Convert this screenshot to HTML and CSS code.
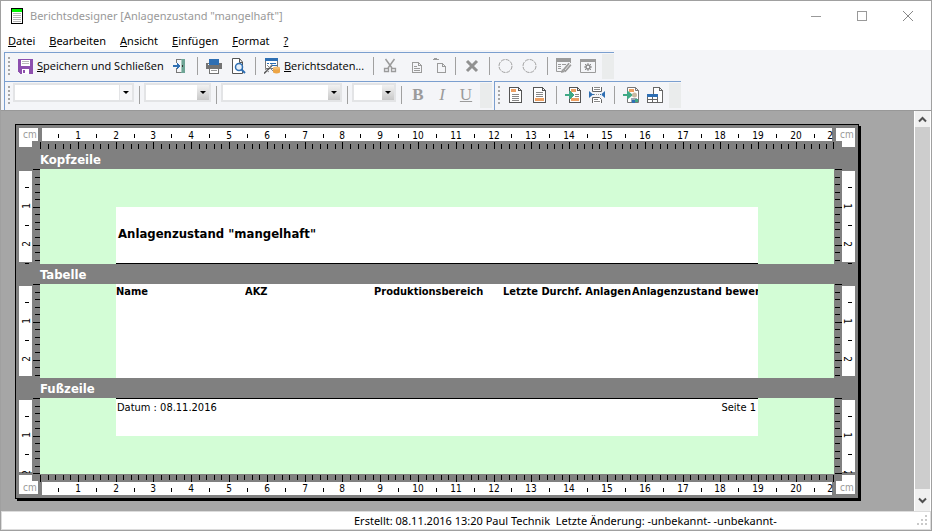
FILE: index.html
```html
<!DOCTYPE html>
<html lang="de">
<head>
<meta charset="utf-8">
<title>Berichtsdesigner</title>
<link rel="stylesheet" href="styles.css">
</head>
<body>
<div class="window">
  <header class="titlebar">
    <svg class="app-icon" width="12" height="16" viewBox="0 0 12 16" shape-rendering="crispEdges"><path fill="#000" d="M0 0h12v16H0z"/><path fill="#fff" d="M1 1h10v14H1z"/><path fill="#00f000" d="M1 1h10v3H1z"/><path fill="#b4b4b4" d="M2 5h8v1H2zM2 7h8v1H2zM2 9h8v1H2zM2 11h8v1H2zM2 13h8v1H2z"/></svg>
    <h1 class="title">Berichtsdesigner [Anlagenzustand "mangelhaft"]</h1>
    <div class="win-buttons">
      <button class="win-btn" aria-label="Minimieren"><svg width="10" height="10" shape-rendering="crispEdges"><path d="M0 5h10v1H0z" fill="#999"/></svg></button>
      <button class="win-btn" aria-label="Maximieren"><svg width="10" height="10" shape-rendering="crispEdges"><path d="M.5.5h9v9h-9z" fill="none" stroke="#999"/></svg></button>
      <button class="win-btn" aria-label="Schließen"><svg width="10" height="10"><path d="M0 0l10 10M10 0L0 10" fill="none" stroke="#888"/></svg></button>
    </div>
  </header>
  <nav class="menubar">
    <a class="menu" href="#"><u>D</u>atei</a>
    <a class="menu" href="#"><u>B</u>earbeiten</a>
    <a class="menu" href="#"><u>A</u>nsicht</a>
    <a class="menu" href="#"><u>E</u>infügen</a>
    <a class="menu" href="#"><u>F</u>ormat</a>
    <a class="menu" href="#"><u>?</u></a>
  </nav>
  <div class="toolbars">
    <div class="toolbar-row">
      <div class="toolbar">
        <span class="grip"></span>
        <button class="text-btn"><svg width="16" height="16" shape-rendering="crispEdges"><path fill="#8d4fae" d="M0 1h15v15H2l-2-2z"/><path fill="#fff" d="M3 2h9v6H3zM4 11h7v5H4z"/><path fill="#b9b9b9" d="M4 3h7v1H4zM4 5h7v1H4z"/><path fill="#8d4fae" d="M5 12h2v3H5z"/></svg><span><u>S</u>peichern und Schließen</span></button>
        <button class="icon-btn" aria-label="Schließen"><svg width="16" height="16" shape-rendering="crispEdges"><path fill="none" stroke="#777" d="M4.500 5V1.500H12M4.500 10v4.500H12"/><path fill="#6fa596" d="M9 1h4v14H9z"/><path fill="#a9cabf" d="M9 2h1v12H9z"/><path fill="#333" d="M10 7h1v2h-1z"/><path fill="#2f6fb3" d="M1 7h4V5l4 3-4 3V9H1z"/></svg></button>
        <span class="sep"></span>
        <button class="icon-btn" aria-label="Drucken"><svg width="16" height="16" shape-rendering="crispEdges"><path fill="#737373" d="M0 5h16v6h-3v-1H3v1H0z"/><path fill="#2f6fb3" d="M3 1h10v6H3z"/><path fill="#fff" d="M2 6h1v1H2zM4 11h8v4H4z"/><path fill="none" stroke="#737373" d="M3.500 10.500h9v5h-9z"/><path fill="#999" d="M5 12h6v1H5z"/></svg></button>
        <button class="icon-btn" aria-label="Seitenansicht"><svg width="16" height="16"><path fill="#fff" stroke="#555" d="M2.500.5h7l3 3.500v11.500h-10zM9.500.5v4h3"/><circle cx="9" cy="9" r="3.500" fill="#e6f0fa" stroke="#2f6fb3" stroke-width="1.500"/><path d="M11.500 11.500l3.500 3.500" stroke="#2f6fb3" stroke-width="2"/></svg></button>
        <span class="sep"></span>
        <button class="text-btn data"><svg width="16" height="16"><path fill="#fff" stroke="#777" d="M1.500 2.500h12v8h-12z"/><path fill="#2f6fb3" d="M1 0h13v3H1z"/><path fill="#2f6fb3" d="M3 5h2v1H3zM6 5h6v1H6zM8 7h5v1H8z"/><path d="M0 15.500L8 7.500" stroke="#555" stroke-width="1.500"/><path d="M3 7l6 6M1 11l4 3M8 6l-2 4" stroke="#888"/><path fill="#eda545" d="M9 10h7v4.500q-3.500 2-7 0z"/><ellipse cx="12.500" cy="10" rx="3.500" ry="1.500" fill="#f3bd72"/></svg><span><u>B</u>erichtsdaten...</span></button>
        <span class="sep"></span>
        <button class="icon-btn" aria-label="Ausschneiden"><svg width="16" height="16"><path d="M3.500 1L10 10M12.500 1L6 10" fill="none" stroke="#9b9b9b" stroke-width="1.500"/><path d="M2.500 10.500h4v3h-4zM9.500 10.500h4v3h-4z" fill="none" stroke="#9b9b9b" stroke-width="1.300"/></svg></button>
        <button class="icon-btn" aria-label="Kopieren"><svg width="16" height="16" shape-rendering="crispEdges"><path d="M6.500 4.500h6l3 3v7h-9zM12.500 4.500v3h3M8 8.500h3M8 10.500h6M8 12.500h6" fill="none" stroke="#9b9b9b"/></svg></button>
        <button class="icon-btn" aria-label="Einfügen"><svg width="16" height="16" shape-rendering="crispEdges"><path fill="#9b9b9b" d="M4 0h3v1H4zM3 1h6v1H3z"/><path d="M7.500 5.500h5l3 3v6h-8zM12.500 5.500v3h3" fill="none" stroke="#9b9b9b"/></svg></button>
        <span class="sep"></span>
        <button class="icon-btn" aria-label="Löschen"><svg width="16" height="16"><path d="M3 3l10 10M13 3L3 13" stroke="#919191" stroke-width="3"/></svg></button>
        <span class="sep"></span>
        <button class="icon-btn" aria-label="Rückgängig"><svg width="16" height="16"><circle cx="7.500" cy="8" r="6.500" fill="none" stroke="#a2a2a2" stroke-dasharray="4 1"/></svg></button>
        <button class="icon-btn" aria-label="Wiederholen"><svg width="16" height="16"><circle cx="7.500" cy="8" r="6.500" fill="none" stroke="#a2a2a2" stroke-dasharray="4 1"/></svg></button>
        <span class="sep"></span>
        <button class="icon-btn" aria-label="Eigenschaften"><svg width="16" height="16"><path fill="#9b9b9b" d="M0 0h15v4H0z"/><path d="M.5 4v9.500H6M14.500 4v1M2 6.500h3M6 6.500h4M2 8.500h3M2 10.500h3" fill="none" stroke="#9b9b9b"/><path d="M8 13l6-7" stroke="#9b9b9b" stroke-width="4"/><path d="M9 12l5-6" stroke="#e4e4e4"/><path fill="#9b9b9b" d="M5 15l1-4 3 3z"/></svg></button>
        <button class="icon-btn" aria-label="Einstellungen"><svg width="16" height="16"><path d="M.5 1.500h15v13H.5z" fill="none" stroke="#9b9b9b"/><path fill="#9b9b9b" d="M0 1h16v3H0z"/><circle cx="8" cy="9" r="2" fill="none" stroke="#8d8d8d" stroke-width="1.500"/><path d="M8 5v2M8 11v2M4 9h2M10 9h2M5 6l1.500 1.500M11 6L9.500 7.500M5 12l1.500-1.500M11 12l-1.500-1.500" stroke="#8d8d8d"/></svg></button>
        <span class="more"></span>
      </div>
    </div>
    <div class="toolbar-row">
      <div class="toolbar">
        <span class="grip"></span>
        <span class="combo wide plain"><select aria-label="Formatvorlage"><option></option></select></span>
        <span class="sep"></span>
        <span class="combo mid"><select aria-label="Stil"><option></option></select></span>
        <span class="sep"></span>
        <span class="combo wide"><select aria-label="Schriftart"><option></option></select></span>
        <span class="sep"></span>
        <span class="combo small"><select aria-label="Schriftgröße"><option></option></select></span>
        <span class="sep"></span>
        <button class="icon-btn letter"><b>B</b></button>
        <button class="icon-btn letter"><i>I</i></button>
        <button class="icon-btn letter"><u>U</u></button>
        <span class="more"></span>
      </div>
      <div class="toolbar">
        <span class="grip"></span>
        <button class="icon-btn" aria-label="Kopfzeile"><svg width="16" height="16" shape-rendering="crispEdges"><path d="M2.500.5h9l3 3v12h-12zM11.500.5v3h3" fill="#fff" stroke="#555"/><path fill="#eda063" d="M4 2h5v3H4z"/><path fill="#888" d="M5 7h7v1H5zM5 9h7v1H5zM5 11h7v1H5zM5 13h7v1H5z"/></svg></button>
        <button class="icon-btn" aria-label="Fußzeile"><svg width="16" height="16" shape-rendering="crispEdges"><path d="M2.500.5h9l3 3v12h-12zM11.500.5v3h3" fill="#fff" stroke="#555"/><path fill="#eda063" d="M4 11h9v3H4z"/><path fill="#888" d="M5 5h7v1H5zM5 7h7v1H5zM5 9h7v1H5z"/></svg></button>
        <span class="sep"></span>
        <button class="icon-btn" aria-label="Seite einfügen"><svg width="16" height="16" shape-rendering="crispEdges"><path d="M4.500.5h8l3 3v12h-11zM12.500.5v3h3" fill="#fff" stroke="#555"/><path fill="#eda063" d="M6 2h5v3H6zM6 11h8v3H6z"/><path fill="#888" d="M10 7h4v1h-4zM10 9h4v1h-4z"/><path fill="#3fa985" d="M0 7h4V4h1l5 4-5 4H4V9H0z"/></svg></button>
        <button class="icon-btn" aria-label="Seitenumbruch"><svg width="16" height="16"><path d="M3.500 0v4.500h9V0M3.500 16v-5.500h7l2 2V16" fill="#fff" stroke="#666"/><path fill="#888" d="M5 0h6v1H5zM5 2h6v1H5zM5 12h4v1H5zM5 14h6v1H5z"/><path fill="#2f6fb3" d="M0 4l4 3.500L0 11zM16 4l-4 3.500 4 3.500zM3 7h2v1H3zM11 7h2v1h-2z"/><path stroke="#999" stroke-dasharray="1 1" d="M5 7.500h6"/></svg></button>
        <span class="sep"></span>
        <button class="icon-btn" aria-label="Bild einfügen"><svg width="16" height="16"><path d="M4.500.5h8l3 3v12h-11zM12.500.5v3h3" fill="#fff" stroke="#777"/><path fill="#eda063" d="M6 2h5v3H6z"/><path fill="#3fa985" d="M0 7h4V4h1l5 4-5 4H4V9H0z"/><circle cx="11.500" cy="8" r="2.500" fill="#c7b9a2"/><path fill="#9aa6b3" d="M8 11h6v4H8z"/><path fill="#2f6fb3" d="M9 13h3v3H9z"/><path fill="#3fa985" d="M12 12h3v3h-3z"/></svg></button>
        <button class="icon-btn" aria-label="Tabelle einfügen"><svg width="16" height="16" shape-rendering="crispEdges"><path d="M6.500 8V.5h6l3 3v12H11M12.500.5v3h3" fill="#fff" stroke="#666"/><path d="M.5 7.500h10v8H.5zM5.500 8v7M1 12.500h9" fill="#fff" stroke="#666"/><path fill="#2f6fb3" d="M0 7h11v3H0z"/></svg></button>
        <span class="more"></span>
      </div>
    </div>
  </div>

  <main class="workspace">
    <div class="canvas">
      <div class="sheet">
        <div class="ruler-row top">
          <span class="unit left">cm</span><svg class="ruler" data-dir="top"></svg><span class="unit right">cm</span>
        </div>
        <h2 class="band-title">Kopfzeile</h2>
        <div class="band header">
          <svg class="vruler" data-dir="left"></svg>
          <div class="paper"><div class="area"><strong>Anlagenzustand "mangelhaft"</strong></div></div>
          <svg class="vruler" data-dir="right"></svg>
        </div>
        <h2 class="band-title">Tabelle</h2>
        <div class="band body">
          <svg class="vruler" data-dir="left"></svg>
          <div class="paper"><div class="area"><table class="columns"><tr><th>Name</th><th>AKZ</th><th>Produktionsbereich</th><th>Letzte Durchf. Anlagen</th><th>Anlagenzustand bewer</th></tr></table></div></div>
          <svg class="vruler" data-dir="right"></svg>
        </div>
        <h2 class="band-title">Fußzeile</h2>
        <div class="band footer">
          <svg class="vruler" data-dir="left"></svg>
          <div class="paper"><div class="area"><span>Datum : 08.11.2016</span><span>Seite 1</span></div></div>
          <svg class="vruler" data-dir="right"></svg>
        </div>
        <div class="ruler-row bottom">
          <span class="unit left">cm</span><svg class="ruler" data-dir="bottom"></svg><span class="unit right">cm</span>
        </div>
      </div>
    </div>
    <div class="scrollbar">
      <button class="scroll-btn" aria-label="Nach oben"><svg width="9" height="7"><path d="M1 5.500L4.500 2 8 5.500" fill="none" stroke="#505050" stroke-width="2"/></svg></button>
      <div class="thumb"></div>
      <button class="scroll-btn down" aria-label="Nach unten"><svg width="9" height="7"><path d="M1 1.500L4.500 5 8 1.500" fill="none" stroke="#505050" stroke-width="2"/></svg></button>
    </div>
  </main>
  <footer class="status">
    <span class="status-text">Erstellt: 08.11.2016 13:20 Paul Technik&nbsp; Letzte Änderung: -unbekannt- -unbekannt-</span>
    <svg class="size-grip" width="11" height="11" shape-rendering="crispEdges"><path fill="#c9c9c9" d="M8 0h2v2H8zM4 4h2v2H4zM8 4h2v2H8zM0 8h2v2H0zM4 8h2v2H4zM8 8h2v2H8z"/></svg>
  </footer>
</div>
<script src="rulers.js"></script>
</body>
</html>
```
FILE: styles.css
```css
* { box-sizing: border-box; }
body {
  margin: 0;
  font: 11px/16px "Noto Sans", "Open Sans", sans-serif;
  color: #000;
}
button { border: 0; padding: 0; background: none; font: inherit; color: inherit; }
svg { display: block; flex: none; }
.window {
  display: flex;
  flex-direction: column;
  height: 100vh;
  border: 1px solid #a0a0a0;
  background: #fff;
}

/* Title and menu */
.titlebar { display: flex; align-items: center; height: 30px; padding-left: 10px; }
.title { flex: 1; margin: 0 0 0 7px; font-size: 11px; font-weight: 400; color: #999; }
.win-buttons { display: flex; }
.win-btn { display: grid; place-items: center; width: 46px; height: 28px; }
.menubar { display: flex; gap: 14px; height: 19px; padding-left: 7px; align-items: center; }
.menu { color: #000; text-decoration: none; }

/* Toolbars */
.toolbars { background: #f4f5f8; padding: 2px 0 0 3px; }
.toolbar-row { display: flex; gap: 2px; }
.toolbar {
  display: flex;
  align-items: center;
  height: 29px;
  padding-bottom: 2px;
  border-top: 1px solid #7b9fcf;
  border-left: 1px solid #7b9fcf;
}
.grip {
  width: 8px;
  height: 18px;
  background: repeating-linear-gradient(#a6a6a6 0 2px, transparent 2px 4px) 3px 0 / 2px 100% no-repeat;
}
.text-btn {
  display: flex;
  align-items: center;
  gap: 3px;
  width: 155px;
  padding-left: 5px;
  font-family: "Open Sans", "Noto Sans", sans-serif;
  white-space: nowrap;
}
.text-btn.data { width: 108px; padding-left: 4px; gap: 4px; }
.icon-btn { display: grid; place-items: center; width: 24px; height: 24px; }
.letter { font: 17px/20px "Liberation Serif", serif; color: #9b9b9b; }
.sep { width: 10px; height: 18px; background: linear-gradient(#a0a0a0, #a0a0a0) 5px 0 / 1px 100% no-repeat; }
.more { width: 12px; height: 25px; margin-left: 2px; background: #eaecec; }
.combo { position: relative; align-self: flex-start; height: 19px; margin-top: 1px; border: 2px solid #e3e4e6; background: #fff; }
.combo select { appearance: none; width: 100%; height: 15px; border: 0; background: none; display: block; }
.combo::before {
  content: "";
  position: absolute;
  top: 0; right: 0; bottom: 0;
  width: 12px;
  background: linear-gradient(#f2f2f2, #c8c8c8);
}
.combo.plain::before { background: #f6f6f8; border-left: 1px solid #e3e4e6; }
.combo::after {
  content: "";
  position: absolute;
  top: 6px; right: 3px;
  border: 3px solid transparent;
  border-top-color: #000;
  border-bottom: 0;
}
.wide { width: 121px; }
.mid { width: 67px; }
.small { width: 44px; }

/* Workspace */
.workspace { display: flex; flex: 1; min-height: 0; background: #a6a6a6; border-top: 1px solid #989898; }
.canvas { flex: 1; min-width: 0; overflow: hidden; padding: 13px 0 0 14px; }
.sheet {
  width: max-content;
  padding: 3px;
  border: 1px solid #000;
  background: #808080;
  box-shadow: 2px 2px 0 #000;
}
.ruler-row { display: flex; height: 21px; }
.ruler-row.bottom { align-items: center; }
.unit {
  width: 21px;
  height: 19px;
  padding-left: 4px;
  font: 10px/13px "DejaVu Sans Condensed", sans-serif;
  color: #999;
  background: linear-gradient(#fff, #fff) 0 0 / 19px 13px no-repeat, linear-gradient(#fff, #fff) 0 0 / 13px 19px no-repeat;
}
.unit.right { padding-left: 6px; background-position: 2px 0, 8px 0; }
.bottom .unit { line-height: 25px; background-position: 0 6px, 0 0; }
.bottom .unit.right { background-position: 2px 6px, 8px 0; }
.ruler { width: 794px; height: 21px; }
.band-title {
  height: 20px;
  margin: 0;
  padding-left: 21px;
  font: bold 13px/22px "DejaVu Sans Condensed", sans-serif;
  color: #fff;
}
.band { display: flex; }
.header { height: 95px; }
.body { height: 94px; }
.footer { height: 76px; }
.vruler { width: 21px; height: 100%; overflow: visible; }
.paper { width: 794px; padding: 0 76px; background: #d3fdd6; font: 11px/16px "DejaVu Sans Condensed", sans-serif; }
.area { height: 100%; background: #fff; }
.header .paper { padding-top: 38px; }
.header .area { padding: 19px 2px; border-bottom: 1px solid #000; font-size: 13px; }
.footer .area { display: flex; justify-content: space-between; height: 38px; padding: 1px 2px 0 1px; border-top: 1px solid #000; }
.columns { width: 100%; table-layout: fixed; border-collapse: collapse; }
.columns th { padding: 0; text-align: left; white-space: nowrap; overflow: hidden; }
.columns th:not(:last-child) { width: 129px; }

.ruler text, .vruler text { font: 10px "DejaVu Sans Condensed", sans-serif; text-anchor: middle; }

.scrollbar { display: flex; flex-direction: column; width: 17px; border: solid #fff; border-width: 0 1px; background: #f0f0f0; }
.scroll-btn { display: grid; place-items: center; height: 16px; }
.scroll-btn.down { height: 22px; }
.thumb { flex: 1; background: #cdcdcd; }

/* Status */
.status { display: flex; align-items: center; height: 19px; border: 1px solid #dcdcdc; background: #fff; padding-right: 2px; }
.status-text { flex: 1; padding-left: 352px; white-space: nowrap; }
```
FILE: rulers.js
```js
const CM = 37.8;
const NS = 'http://www.w3.org/2000/svg';

function add(svg, name, attrs, text) {
  const el = document.createElementNS(NS, name);
  for (const key in attrs) el.setAttribute(key, attrs[key]);
  if (text !== undefined) el.textContent = text;
  svg.appendChild(el);
}

function box(svg, x, y, width, height, fill) {
  add(svg, 'rect', { x, y, width, height, fill });
}

document.querySelectorAll('.ruler').forEach(svg => {
  const top = svg.dataset.dir === 'top';
  const strip = top ? 0 : 8;
  box(svg, 2, strip, 790, 13, '#fff');
  for (let i = 0; i <= 105; i++) {
    const x = Math.min(793, Math.round(i * CM / 5));
    const len = i % 5 ? 5 : 7;
    box(svg, x, top ? 21 - len : 1, 1, len, '#000');
  }
  for (let i = 1; i < 42; i++) {
    const x = Math.round(i * CM / 2);
    if (i % 2) box(svg, x - 1, strip + 6, 1, 4, '#000');
    else add(svg, 'text', { x: x, y: strip + (top ? 11 : 10) }, i / 2);
  }
  add(svg, 'text', { x: 790, y: strip + (top ? 11 : 10) }, '2');
});

document.querySelectorAll('.vruler').forEach(svg => {
  const left = svg.dataset.dir === 'left';
  const height = svg.parentNode.clientHeight;
  const strip = left ? 0 : 8;
  box(svg, strip, 2, 13, height - 4, '#fff');
  for (let i = 0; i * CM / 5 <= height; i++) {
    const y = Math.round(i * CM / 5);
    const len = i % 5 ? 5 : 7;
    box(svg, left ? 21 - len : 1, Math.min(y, height - 1), len, 1, '#000');
  }
  for (let i = 1; i * CM / 2 <= height; i++) {
    const y = Math.round(i * CM / 2) - 1;
    if (i % 2) box(svg, strip + 6, y, 4, 1, '#000');
    else add(svg, 'text', {
      transform: left ? `translate(${strip + 11} ${y}) rotate(-90)` : `translate(${strip + 2} ${y}) rotate(90)`
    }, i / 2);
  }
  if (height < 80) box(svg, strip, height - 1, 13, 3, '#808080');
});
```
